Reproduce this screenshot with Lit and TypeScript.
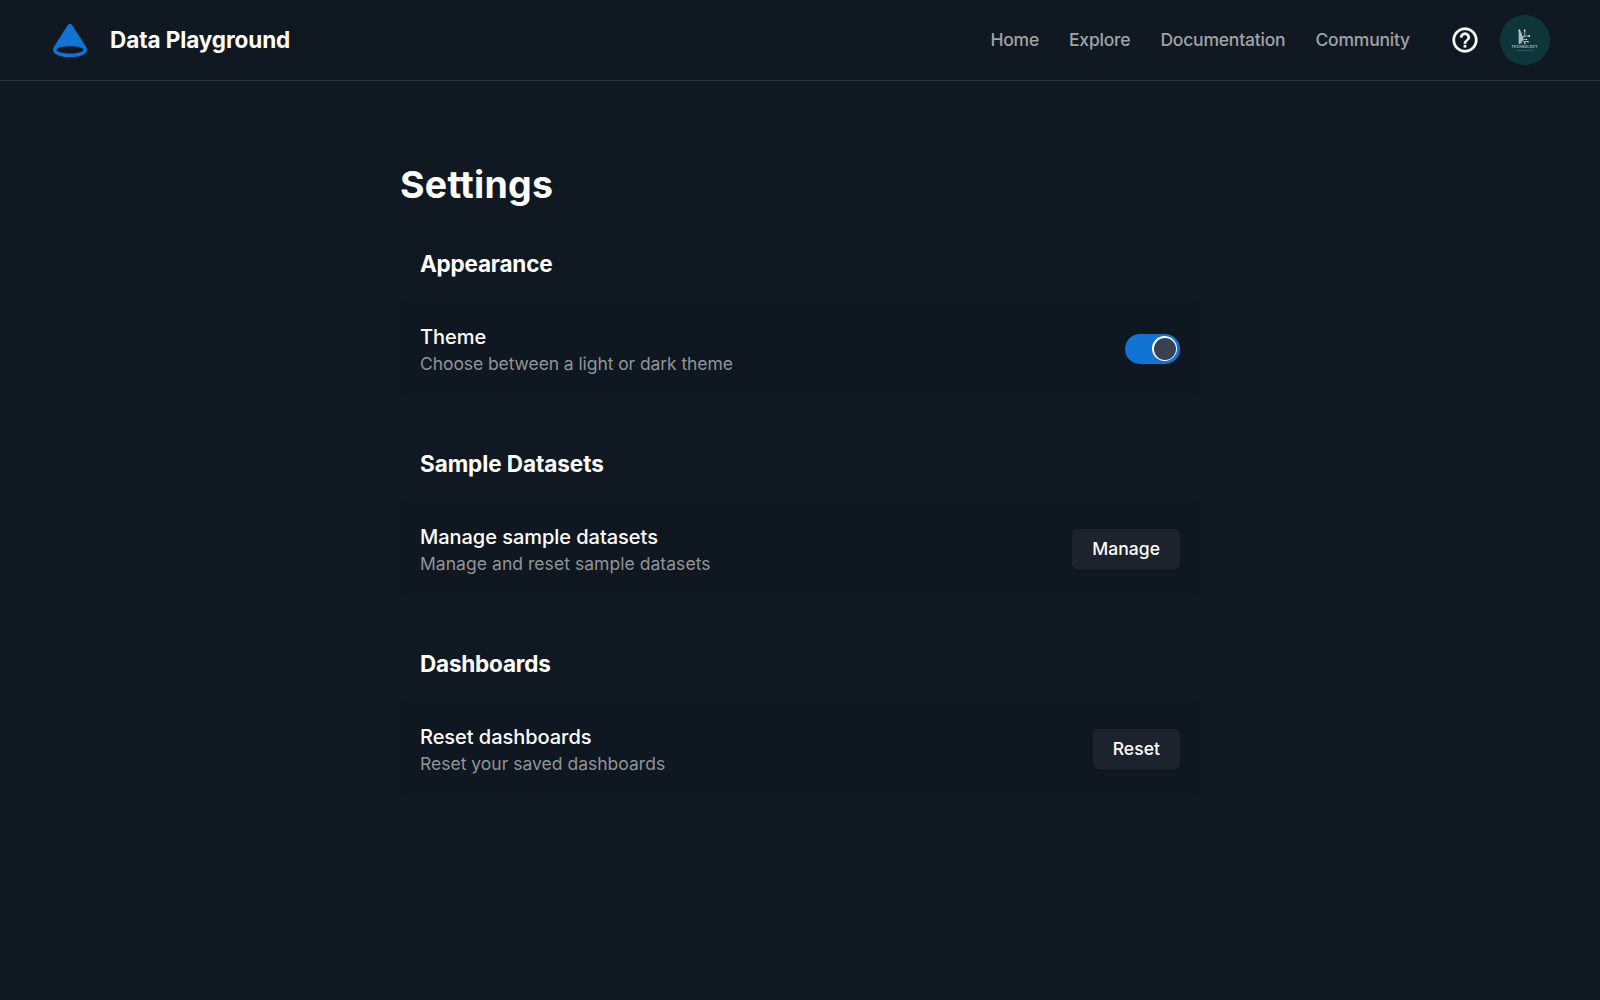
import { LitElement, html, css, svg } from "lit";
import { customElement, property, state } from "lit/decorators.js";

const logo = svg`
  <svg viewBox="0 0 40 40" width="40" height="40" aria-hidden="true">
    <path fill="#1173d4" fill-rule="evenodd"
      d="M17.9 5.1C18.7 3.6 21.3 3.6 22.1 5.1L35.9 26.6C36.7 27.8 37 28.8 37 29.9C37 34.1 29.6 37.1 20 37.1S3 34.1 3 29.9C3 28.8 3.3 27.8 4.1 26.6ZM20 26.2C12.5 26.2 6.5 27.7 6.5 29.8C6.5 31.9 12.5 33.5 20 33.5S33.5 31.9 33.5 29.8C33.5 27.7 27.5 26.2 20 26.2Z"/>
  </svg>`;

const helpIcon = svg`
  <svg viewBox="0 0 24 24" width="30" height="30" aria-hidden="true">
    <path fill="#fff" stroke="#fff" stroke-width=".2" d="M11 18h2v-2h-2v2zm1-16C6.48 2 2 6.48 2 12s4.48 10 10 10 10-4.48 10-10S17.52 2 12 2zm0 18c-4.41 0-8-3.59-8-8s3.59-8 8-8 8 3.59 8 8-3.59 8-8 8zm0-14c-2.21 0-4 1.79-4 4h2c0-1.1.9-2 2-2s2 .9 2 2c0 2-3 1.75-3 5h2c0-2.25 3-2.5 3-5 0-2.21-1.79-4-4-4z"/>
  </svg>`;

const avatar = svg`
  <svg viewBox="0 0 50 50" width="50" height="50" aria-hidden="true">
    <circle cx="25" cy="25" r="25" fill="#0e363a"/>
    <path d="M18.800 15.600h1.600l3 8-3 5.200h-1.600z" fill="#9fb3b4"/>
    <g stroke="#b9c8c8" stroke-width=".8" fill="none">
      <path d="M19.300 15v14M21.200 17.500v11M24.700 16v4l-3.500 4 4 4.200M22 22.600l4-1.600h3M22 24.400h4.500M24 26.500h3.500"/>
    </g>
    <g fill="#e0e8e8">
      <circle cx="19.300" cy="15.300" r=".9"/><circle cx="24.700" cy="15.500" r=".9"/>
      <circle cx="29.200" cy="21" r=".9"/><circle cx="26.600" cy="24.400" r=".7"/>
      <circle cx="28" cy="26.700" r=".8"/><circle cx="24.800" cy="28.200" r=".8"/>
    </g>
    <text x="11.500" y="33.400" textLength="26" font-family="Inter, sans-serif"
      font-size="3" font-weight="700" fill="#b4c4c4">TECHNOLOGY</text>
    <path d="M16.500 35.500h17" stroke="#5c7b7d" stroke-width=".6" stroke-dasharray="1.500 .5"/>
  </svg>`;

@customElement("theme-switch")
class ThemeSwitch extends LitElement {
  static styles = css`
    :host { display: block; }
    .track {
      display: flex; align-items: center; justify-content: flex-start;
      box-sizing: border-box; width: 55px; height: 30px; padding: 2.5px 3px;
      border: 0; border-radius: 15px; background: #374151; cursor: pointer;
    }
    .track.on { justify-content: flex-end; background: #1173d4; }
    .knob {
      box-sizing: border-box; width: 25px; height: 25px; border-radius: 50%;
      background: #fff; padding: 1.5px;
    }
    .knob::before {
      content: ""; display: block; height: 100%; border-radius: 50%; background: #374151;
    }
  `;
  @state() on = true;
  render() {
    return html`<button class="track ${this.on ? "on" : ""}" role="switch" aria-checked=${this.on}
      @click=${() => (this.on = !this.on)}><span class="knob"></span></button>`;
  }
}

@customElement("settings-section")
class SettingsSection extends LitElement {
  static styles = css`
    :host { display: block; }
    .heading {
      margin: 0; padding: 0 20px 20px; font-size: 22.5px; line-height: 35px;
      font-weight: 700; color: #fff; letter-spacing: var(--heading-spacing, -0.2px);
    }
    .card {
      display: flex; align-items: center; justify-content: space-between;
      padding: 20px; border-radius: 10px; background: #0f1720;
    }
    .label {
      margin: 0; padding-top: 2px; font-size: 20px; line-height: 28px; font-weight: 500;
      color: #fff; letter-spacing: -0.04px;
    }
    .note {
      margin: 0; font-size: 17.5px; line-height: 25px; color: #919497;
      letter-spacing: var(--note-spacing, 0.01px);
    }
  `;
  @property() heading = "";
  @property() label = "";
  @property() note = "";
  render() {
    return html`
      <h2 class="heading">${this.heading}</h2>
      <div class="card">
        <div>
          <p class="label">${this.label}</p>
          <p class="note">${this.note}</p>
        </div>
        <slot></slot>
      </div>`;
  }
}

@customElement("app-root")
class AppRoot extends LitElement {
  static styles = css`
    :host {
      display: block; min-height: 1000px; background: #101922; color: #fff;
      font-family: Inter, sans-serif;
    }
    .header {
      display: flex; align-items: center; justify-content: space-between;
      height: 80px; padding: 0 50px; border-bottom: 1px solid #29313a;
    }
    .brand { display: flex; align-items: center; gap: 20px; }
    .title {
      margin: 0; padding-bottom: 2px; font-size: 22.5px; line-height: 33px; font-weight: 700;
      letter-spacing: -0.08px;
    }
    .right, .nav, .tools { display: flex; align-items: center; }
    .right { gap: 40px; }
    .nav { gap: 30px; padding-bottom: 1px; }
    .tools { gap: 20px; }
    .link {
      font-size: 17.5px; line-height: 25px; font-weight: 500; color: #a0a3a6; text-decoration: none;
      letter-spacing: -0.2px;
    }
    svg { display: block; }
    .main { width: 800px; margin: 0 auto; padding-top: 80.25px; }
    .page-title {
      margin: 0 0 39.5px; padding-top: 0.5px; font-size: 37.5px; line-height: 45px; font-weight: 700;
      font-variant-ligatures: none; letter-spacing: 0.25px;
    }
    .sections { display: flex; flex-direction: column; gap: 50px; }
    .appearance { --note-spacing: -0.08px; }
    .datasets { --note-spacing: 0.05px; --heading-spacing: -0.07px; }
    .button {
      height: 40px; padding: 0 20px; border: 0; border-radius: 5px; background: #1c232c;
      color: #fff; font: 500 17.5px/25px Inter, sans-serif; letter-spacing: 0.05px;
    }
  `;
  links = ["Home", "Explore", "Documentation", "Community"];
  render() {
    return html`
      <header class="header">
        <div class="brand">${logo}<h1 class="title">Data Playground</h1></div>
        <div class="right">
          <nav class="nav">${this.links.map((l) => html`<a class="link" href="#">${l}</a>`)}</nav>
          <div class="tools">${helpIcon}${avatar}</div>
        </div>
      </header>
      <main class="main">
        <h1 class="page-title">Settings</h1>
        <div class="sections">
          <settings-section class="appearance" heading="Appearance" label="Theme" note="Choose between a light or dark theme">
            <theme-switch></theme-switch>
          </settings-section>
          <settings-section class="datasets" heading="Sample Datasets" label="Manage sample datasets" note="Manage and reset sample datasets">
            <button class="button">Manage</button>
          </settings-section>
          <settings-section heading="Dashboards" label="Reset dashboards" note="Reset your saved dashboards">
            <button class="button">Reset</button>
          </settings-section>
        </div>
      </main>`;
  }
}
